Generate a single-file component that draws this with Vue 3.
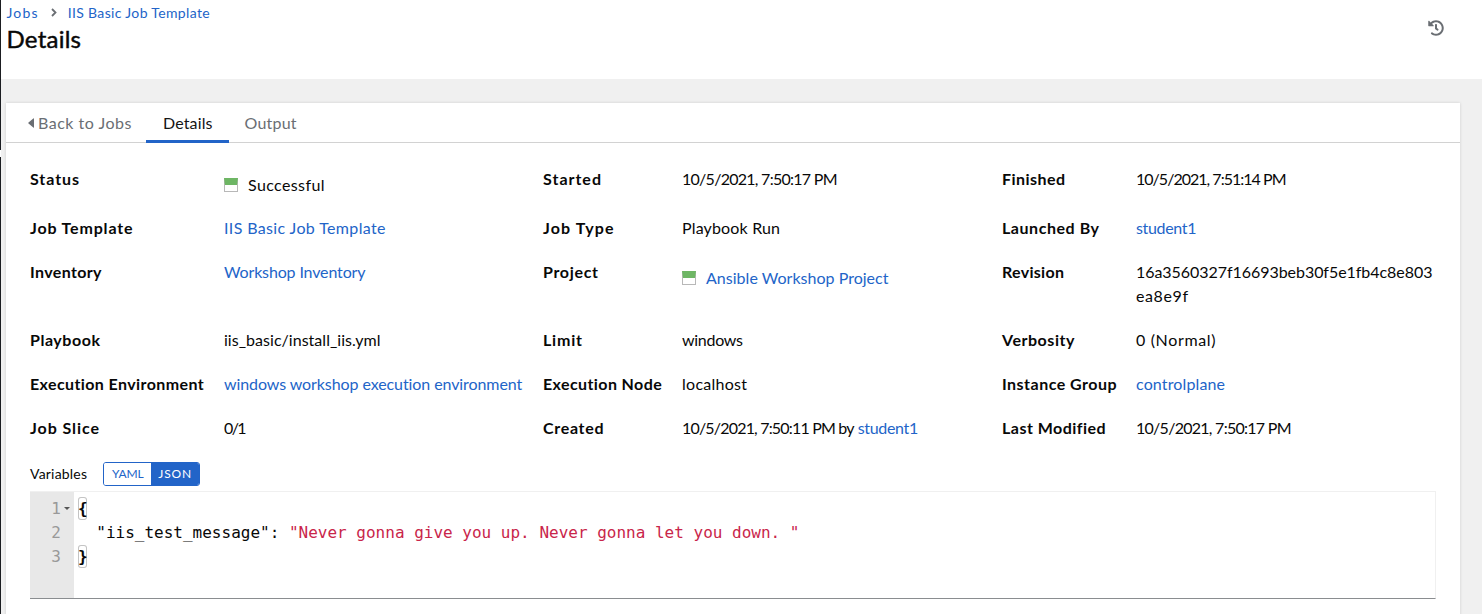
<script setup>
// Adjusts tracking so a label occupies its design width in pixels.
const vTrack = (el, { value }) => {
  if (!value) return
  el.style.letterSpacing = '0px'
  const natural = el.getBoundingClientRect().width
  const count = el.textContent.trim().length
  el.style.letterSpacing = (value - natural) / Math.max(1, count - 1) + 'px'
}

const indent = '  '

const rows = [
  [
    { label: 'Status', lw: 49, value: 'Successful', vw: 76.5, icon: true },
    { label: 'Started', lw: 58, value: '10/5/2021, 7:50:17 PM', vw: 155.5 },
    { label: 'Finished', lw: 63, value: '10/5/2021, 7:51:14 PM', vw: 150.5 },
  ],
  [
    { label: 'Job Template', lw: 102.5, value: 'IIS Basic Job Template', vw: 161.5, link: true },
    { label: 'Job Type', lw: 70.5, value: 'Playbook Run', vw: 98 },
    { label: 'Launched By', lw: 97, value: 'student1', vw: 60.5, link: true },
  ],
  [
    { label: 'Inventory', lw: 71.5, value: 'Workshop Inventory', vw: 141.5, link: true },
    { label: 'Project', lw: 55, value: 'Ansible Workshop Project', vw: 182.5, link: true, icon: true },
    { label: 'Revision', lw: 62, value: '16a3560327f16693beb30f5e1fb4c8e803', vw: 296.5, rest: 'ea8e9f', rw: 52 },
  ],
  [
    { label: 'Playbook', lw: 70, value: 'iis_basic/install_iis.yml', vw: 156.5 },
    { label: 'Limit', lw: 39, value: 'windows', vw: 61 },
    { label: 'Verbosity', lw: 72.5, value: '0 (Normal)', vw: 79.5 },
  ],
  [
    { label: 'Execution Environment', lw: 174, value: 'windows workshop execution environment', vw: 298.5, link: true },
    { label: 'Execution Node', lw: 119, value: 'localhost', vw: 65 },
    { label: 'Instance Group', lw: 114.5, value: 'controlplane', vw: 89, link: true },
  ],
  [
    { label: 'Job Slice', lw: 69, value: '0/1', vw: 22.5 },
    { label: 'Created', lw: 60.5, value: '10/5/2021, 7:50:11 PM by', vw: 172.5, by: 'student1', bw: 60.5 },
    { label: 'Last Modified', lw: 103.5, value: '10/5/2021, 7:50:17 PM', vw: 155.5 },
  ],
]
</script>

<template>
  <div class="page">
    <div class="edge"><i></i></div>
    <div class="main">
      <header class="header">
        <div>
          <nav class="crumbs">
            <a v-track="31">Jobs</a>
            <svg width="6" height="9" viewBox="0 0 6 9"><path d="M1 1l3.5 3.5L1 8" fill="none" stroke="#6a6e73" stroke-width="1.8" /></svg>
            <a v-track="142">IIS Basic Job Template</a>
          </nav>
          <h1><span v-track="74.5">Details</span></h1>
        </div>
        <svg class="history" width="16" height="16" viewBox="0 0 512 512"><path fill="#6a6e73" d="M504 255.531c.253 136.64-111.18 248.372-247.82 248.468-59.015.042-113.223-20.53-155.822-54.911-11.077-8.94-11.905-25.541-1.839-35.607l11.267-11.267c8.609-8.609 22.353-9.551 31.891-1.984C173.062 425.135 212.781 440 256 440c101.705 0 184-82.311 184-184 0-101.705-82.311-184-184-184-48.814 0-93.149 18.969-126.068 49.932l50.754 50.754c10.08 10.08 2.941 27.314-11.313 27.314H24c-8.837 0-16-7.163-16-16V38.627c0-14.254 17.234-21.393 27.314-11.314l49.372 49.372C129.209 34.136 189.552 8 256 8c136.81 0 247.747 110.78 248 247.531zm-180.912 78.784l9.823-12.63c8.138-10.463 6.253-25.542-4.21-33.679L288 256.349V152c0-13.255-10.745-24-24-24h-16c-13.255 0-24 10.745-24 24v135.651l65.409 50.874c10.463 8.137 25.541 6.253 33.679-4.21z" /></svg>
      </header>

      <section class="card">
        <div class="tabs">
          <div class="tab back">
            <svg width="6" height="10" viewBox="0 0 6 10"><path d="M6 .8v8.4Q6 10 5.3 9.4L.5 5.4Q0 5 .5 4.6L5.3.6Q6 0 6 .8z" fill="#6a6e73" /></svg>
            <span v-track="93.5">Back to Jobs</span>
          </div>
          <div class="tab active"><span v-track="49.5">Details</span></div>
          <div class="tab output"><span v-track="52">Output</span></div>
        </div>

        <div class="details">
          <template v-for="(row, r) in rows" :key="r">
            <template v-for="item in row" :key="item.label">
              <div class="label"><span v-track="item.lw">{{ item.label }}</span></div>
              <div class="value" :class="{ 'with-icon': item.icon }">
                <i v-if="item.icon" class="status"></i>
                <span v-track="item.vw" :class="{ link: item.link }">{{ item.value }}</span>
                <template v-if="item.rest"><br /><span v-track="item.rw">{{ item.rest }}</span></template>
                <span v-if="item.by" v-track="item.bw" class="link by">{{ item.by }}</span>
              </div>
            </template>
          </template>
        </div>

        <div class="variables">
          <span class="variables-label" v-track="57">Variables</span>
          <div class="toggle">
            <button><span v-track="31.5">YAML</span></button>
            <button class="on"><span v-track="33">JSON</span></button>
          </div>
        </div>

        <div class="editor">
          <div class="gutter">
            <div>1<i class="fold"></i></div>
            <div>2</div>
            <div>3</div>
          </div>
          <div class="code">
            <div><b>{</b></div>
            <div>{{ indent }}"iis_test_message": <em>"Never gonna give you up. Never gonna let you down. "</em></div>
            <div><b>}</b></div>
          </div>
        </div>
      </section>
    </div>
  </div>
</template>

<style>
body {
  margin: 0;
  overflow: hidden;
}
</style>

<style scoped>
.page {
  display: flex;
  height: 614px;
  overflow: hidden;
  background: #f0f0f0;
  color: #080808;
  font: 16px/24px Lato, "Liberation Sans", sans-serif;
}
.page span,
.page a {
  display: inline-block;
  white-space: nowrap;
}
.edge {
  width: 1px;
  flex: none;
  background: #1b1d21;
  padding-top: 150px;
  box-sizing: border-box;
}
.edge i {
  display: block;
  height: 7px;
  background: #fff;
}
.main {
  flex: 1;
  min-width: 0;
}
.header {
  display: flex;
  justify-content: space-between;
  box-sizing: border-box;
  height: 79px;
  padding: 2px 38px 0 5.5px;
  background: #fff;
}
.crumbs {
  display: flex;
  align-items: center;
  height: 21px;
  font-size: 14px;
  line-height: 21px;
}
.crumbs svg {
  margin: 0 11px 0 12px;
}
.crumbs a,
.link {
  color: #2264c8;
}
h1 {
  margin: 0;
  font-size: 24px;
  line-height: 32px;
  font-weight: 400;
  -webkit-text-stroke: 0.45px #080808;
}
.history {
  margin-top: 18px;
}
.card {
  box-sizing: border-box;
  width: 1454px;
  height: 520px;
  margin: 24px 0 0 5px;
  background: #fff;
  box-shadow: 0 0 3px rgba(3, 3, 3, 0.14);
}
.tabs {
  display: flex;
  box-sizing: border-box;
  height: 40px;
  border-bottom: 1px solid #d2d2d2;
  color: #6a6e73;
}
.tab {
  box-sizing: border-box;
  height: 40px;
  padding-top: 8px;
}
.back {
  display: flex;
  gap: 4px;
  width: 140px;
  padding-left: 22px;
}
.back svg {
  margin-top: 7px;
}
.active {
  width: 82.5px;
  padding-left: 17px;
  border-bottom: 3px solid #2264c8;
  color: #151515;
}
.output {
  padding-left: 16px;
}
.details {
  display: grid;
  grid-template-columns: 194px 319px 139px 320px 134px 300px;
  row-gap: 20px;
  padding: 24px 0 0 24px;
}
.label {
  font-weight: 700;
}
.with-icon {
  display: flex;
  align-items: center;
  gap: 10px;
  height: 22px;
  padding-top: 7px;
}
.status {
  box-sizing: border-box;
  width: 14px;
  height: 14px;
  border: 1px solid #b8b8b8;
  border-top: 7px solid #6eb664;
  background: #fff;
}
.by {
  margin-left: 4px;
}
.variables {
  display: flex;
  align-items: center;
  gap: 16px;
  height: 24px;
  margin: 22px 0 0 24px;
}
.variables-label {
  font-size: 14px;
}
.toggle {
  display: flex;
  box-sizing: border-box;
  width: 97px;
  height: 24px;
  border: 1px solid #2264c8;
  border-radius: 3px;
  overflow: hidden;
}
button {
  width: 47px;
  padding: 0;
  border: 0;
  background: #fff;
  color: #2264c8;
  font: 12px/22px Lato, sans-serif;
}
.on {
  width: 48px;
  background: #2264c8;
  color: #fff;
}
.editor {
  display: flex;
  box-sizing: border-box;
  width: 1406px;
  height: 108px;
  margin: 5px 0 0 24px;
  border: 1px solid #f0f0f0;
  border-left: 0;
  border-bottom: 1px solid #8a8d90;
  font: 16px/24px "DejaVu Sans Mono", monospace;
}
.gutter {
  box-sizing: border-box;
  width: 44px;
  padding: 5px 13px 0 0;
  background: #e8e8e8;
  color: #999;
  text-align: right;
}
.gutter div {
  position: relative;
}
.fold {
  position: absolute;
  right: -9px;
  top: 10px;
  border: 3px solid transparent;
  border-top-color: #555;
  border-bottom: 0;
}
.code {
  padding: 5px 0 0 3px;
  white-space: pre;
}
.code b {
  display: inline-block;
  box-sizing: border-box;
  width: 9px;
  height: 23px;
  margin-left: 1px;
  box-shadow: inset 0 0 0 1px #c4c4c4;
  border-radius: 3px;
  font-weight: 700;
  vertical-align: top;
}
.code em {
  font-style: normal;
  color: #c9254a;
}
</style>
